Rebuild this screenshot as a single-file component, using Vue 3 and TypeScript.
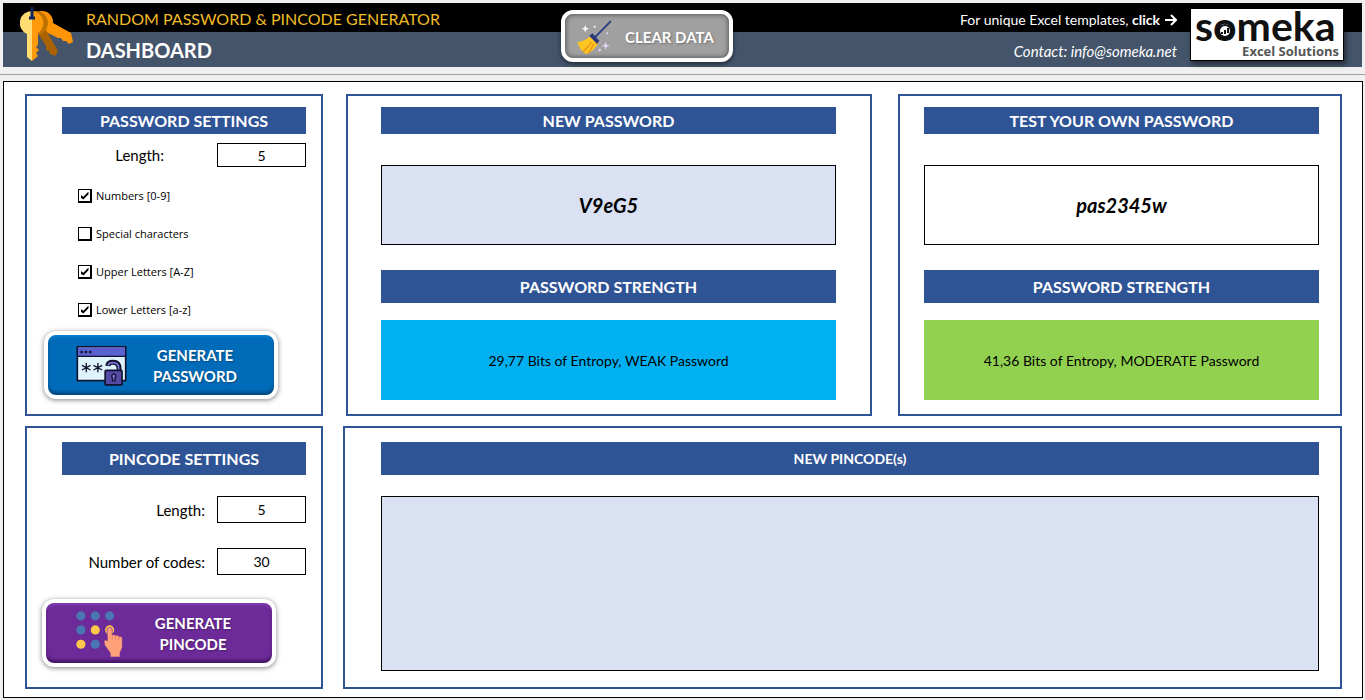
<script setup lang="ts">
import { computed, reactive, ref } from 'vue'

interface CharSet {
  id: string
  label: string
  chars: string
  on: boolean
}

interface Strength {
  text: string
  level: string
}

const DIGITS = '0123456789'
const LOWER = 'abcdefghijklmnopqrstuvwxyz'
const UPPER = LOWER.toUpperCase()
const SPECIAL = '!#$%&()*+-./:;<=>?@[]^_{|}~'

const sets = reactive<CharSet[]>([
  { id: 'numbers', label: 'Numbers [0-9]', chars: DIGITS, on: true },
  { id: 'special', label: 'Special characters', chars: SPECIAL, on: false },
  { id: 'upper', label: 'Upper Letters [A-Z]', chars: UPPER, on: true },
  { id: 'lower', label: 'Lower Letters [a-z]', chars: LOWER, on: true },
])

const passwordLength = ref('5')
const pinLength = ref('5')
const pinCount = ref('30')
const newPassword = ref('V9eG5')
const ownPassword = ref('pas2345w')
const pincodes = ref('')

function pick(pool: string, count: number): string {
  return Array.from({ length: count }, () => pool[Math.floor(Math.random() * pool.length)]).join('')
}

function rate(password: string): Strength {
  const pool = [DIGITS, LOWER, UPPER, SPECIAL]
    .filter((set) => [...password].some((c) => set.includes(c)))
    .reduce((sum, set) => sum + set.length, 0)
  if (!pool) return { text: '', level: 'none' }
  const bits = password.length * Math.log2(pool)
  const level = bits < 36 ? 'weak' : bits < 60 ? 'moderate' : 'strong'
  const shown = bits.toFixed(2).replace('.', ',')
  return { text: `${shown} Bits of Entropy, ${level.toUpperCase()} Password`, level }
}

const newStrength = computed(() => rate(newPassword.value))
const ownStrength = computed(() => rate(ownPassword.value))

function generatePassword() {
  const pool = sets.filter((s) => s.on).map((s) => s.chars).join('')
  newPassword.value = pool ? pick(pool, Number(passwordLength.value) || 0) : ''
}

function generatePincodes() {
  const count = Number(pinCount.value) || 0
  pincodes.value = Array.from({ length: count }, () => pick(DIGITS, Number(pinLength.value) || 0)).join('   ')
}

function clearData() {
  newPassword.value = ''
  ownPassword.value = ''
  pincodes.value = ''
}
</script>

<template>
  <div class="page">
    <header class="header">
      <div class="brand">
        <svg class="keys" viewBox="0 0 53 56" aria-hidden="true">
          <circle cx="22" cy="15" r="11" fill="#ff9505" />
          <path d="M24 24 L33 16 L51 26 L53 35 L49 37 L46 34 L43 34 L41 31 L38 31 L28 26 Z" fill="#ff9505" />
          <path d="M17 25 L26 23 L38 44 L35 49 L30 47 L29 44 L26 43 L26 39 Z" fill="#a86200" />
          <circle cx="16" cy="16" r="12" fill="#c07200" />
          <path d="M12 4 a12 12 0 0 1 6 22 V38 L16 40 L19 43 L16 46 L18 49 L12 54 Z" fill="#ff9a0a" />
          <path d="M12 4 A12 12 0 0 0 7 27 V50 L12 54 Z" fill="#ffdd73" />
          <path d="M12 0 V12 M9 11 H15" stroke="#10255c" stroke-width="3" />
        </svg>
        <div class="titles">
          <p class="product">RANDOM PASSWORD &amp; PINCODE GENERATOR</p>
          <h1>DASHBOARD</h1>
        </div>
      </div>

      <button class="push clear" type="button" @click="clearData">
        <svg class="broom" viewBox="78 56 105 105" aria-hidden="true">
          <path d="M178 61 L134 106" stroke="#2f3f86" stroke-width="6" stroke-linecap="round" />
          <path d="M116 106 Q101 119 80 122 Q84 145 105 158 Q127 151 141 127 Z" fill="#fcc521" />
          <path d="M122 123 L96 152 M129 127 L112 156" stroke="#e8951a" stroke-width="4" />
          <path d="M115 103 L124 96 L145 118 L138 128 Z" fill="#29397a" />
          <g fill="#fff">
            <path d="M103 71 l3 8 l8 3 l-8 3 l-3 9 l-3 -9 l-8 -3 l8 -3 Z" />
            <circle cx="131" cy="76" r="3" />
          </g>
          <g fill="#e3d4f5">
            <path d="M164 121 l3 9 l9 3 l-9 3 l-3 9 l-3 -9 l-9 -3 l9 -3 Z" />
            <circle cx="169" cy="96" r="3" />
            <circle cx="146" cy="146" r="4" />
          </g>
        </svg>
        <span>CLEAR DATA</span>
      </button>

      <div class="about">
        <div class="links">
          <a class="templates" href="#templates">
            <span>For unique Excel templates, <b>click</b></span>
            <svg class="arrow" viewBox="0 0 12 12" aria-hidden="true">
              <path d="M0 6 H11 M6 1 L11 6 L6 11" fill="none" stroke="#fff" stroke-width="2" />
            </svg>
          </a>
          <a class="contact" href="#contact">Contact: info@someka.net</a>
        </div>
        <a class="logo" href="#home">
          <span class="word">s<span class="ring">o<svg viewBox="0 0 12 12" aria-hidden="true">
            <circle cx="6" cy="6" r="7" fill="#111" />
            <circle cx="6" cy="6" r="5" fill="#fff" />
            <path d="M3 9 V7 M6 9 V5 M9 8 V3" stroke="#111" stroke-width="2" />
          </svg></span>meka</span>
          <span class="tag">Excel Solutions</span>
        </a>
      </div>
    </header>

    <main class="sheet">
      <div class="row">
        <section class="panel settings">
          <h2 class="bar slim">PASSWORD SETTINGS</h2>
          <div class="field near">
            <label for="password-length">Length:</label>
            <input id="password-length" v-model="passwordLength" type="text" inputmode="numeric">
          </div>
          <ul class="checks">
            <li v-for="set in sets" :key="set.id">
              <input :id="set.id" v-model="set.on" type="checkbox">
              <label :for="set.id">{{ set.label }}</label>
            </li>
          </ul>
          <button class="push wide blue" type="button" @click="generatePassword">
            <svg class="art" viewBox="136 76 154 124" aria-hidden="true">
              <rect x="140" y="80" width="146" height="102" fill="#dff3fd" stroke="#12122e" stroke-width="5" />
              <rect x="142" y="82" width="142" height="26" fill="#5a62cf" />
              <path d="M140 109 H286" stroke="#12122e" stroke-width="4" />
              <g fill="#12122e">
                <circle cx="153" cy="96" r="4" />
                <circle cx="166" cy="96" r="4" />
                <circle cx="179" cy="96" r="4" />
              </g>
              <path d="M167 129 V157 M154 136 L180 150 M180 136 L154 150 M202 129 V157 M189 136 L215 150 M215 136 L189 150" stroke="#12122e" stroke-width="4" />
              <path d="M232 138 Q233 127 248 127 Q266 127 266 146 V154" fill="none" stroke="#12122e" stroke-width="15" />
              <path d="M233 136 Q235 128 248 128 Q265 128 265 146 V154" fill="none" stroke="#7c74d8" stroke-width="5" />
              <rect x="224" y="151" width="51" height="44" rx="3" fill="#554aa5" stroke="#12122e" stroke-width="5" />
              <path d="M250 162 a7 7 0 0 1 4 12 V183 H246 V174 a7 7 0 0 1 4 -12 Z" fill="#7c74d8" stroke="#12122e" stroke-width="4" />
            </svg>
            <span>GENERATE<br>PASSWORD</span>
          </button>
        </section>

        <section class="panel fresh">
          <h2 class="bar slim">NEW PASSWORD</h2>
          <output class="value tinted">{{ newPassword }}</output>
          <h2 class="bar">PASSWORD STRENGTH</h2>
          <p class="result" :class="newStrength.level">{{ newStrength.text }}</p>
        </section>

        <section class="panel own">
          <h2 class="bar slim">TEST YOUR OWN PASSWORD</h2>
          <input v-model="ownPassword" class="value" type="text" aria-label="Test your own password">
          <h2 class="bar">PASSWORD STRENGTH</h2>
          <p class="result" :class="ownStrength.level">{{ ownStrength.text }}</p>
        </section>
      </div>

      <div class="row pins">
        <section class="panel settings pin-settings">
          <h2 class="bar">PINCODE SETTINGS</h2>
          <div class="field">
            <label for="pin-length">Length:</label>
            <input id="pin-length" v-model="pinLength" type="text" inputmode="numeric">
          </div>
          <div class="field">
            <label for="pin-count">Number of codes:</label>
            <input id="pin-count" v-model="pinCount" type="text" inputmode="numeric">
          </div>
          <button class="push wide purple" type="button" @click="generatePincodes">
            <svg class="art" viewBox="133 72 150 147" aria-hidden="true">
              <g fill="#4a76b4">
                <circle cx="151" cy="90" r="14" />
                <circle cx="195" cy="90" r="14" />
                <circle cx="239" cy="90" r="14" />
                <circle cx="151" cy="133" r="14" />
                <circle cx="195" cy="177" r="14" />
              </g>
              <g fill="#ffc84d">
                <circle cx="195" cy="133" r="14" />
                <circle cx="239" cy="133" r="14" />
                <circle cx="151" cy="177" r="14" />
              </g>
              <path d="M231 133 a8 8 0 0 1 16 0 V149 q6 -5 10 1 q7 -4 10 3 q9 -3 11 5 V184 Q277 194 271 201 V216 H241 V204 L224 180 Q220 167 224 163 L232 166 Z" fill="#ffa27c" stroke="#6b2a95" stroke-width="2" />
              <path d="M247 148 V162 M257 150 V164 M267 154 V166" stroke="#d9705c" stroke-width="2" />
            </svg>
            <span>GENERATE<br>PINCODE</span>
          </button>
        </section>

        <section class="panel codes">
          <h2 class="bar small">NEW PINCODE(s)</h2>
          <textarea v-model="pincodes" readonly aria-label="New pincodes"></textarea>
        </section>
      </div>
    </main>
  </div>
</template>

<style>
body {
  margin: 0;
  background: #f0f0f0;
}
</style>

<style scoped>
.page,
.page * {
  box-sizing: border-box;
}

.page {
  padding: 3px 2px 1px 3px;
  font-family: Lato, "Liberation Sans", sans-serif;
  font-size: 14px;
  color: #000;
}

h1,
h2,
p,
ul {
  margin: 0;
  padding: 0;
}

a {
  color: inherit;
  text-decoration: none;
}

button,
input,
textarea {
  margin: 0;
  font: inherit;
  color: inherit;
}

/* Header */
.header {
  display: grid;
  grid-template-columns: 558fr auto 629fr;
  height: 64px;
  margin-right: 1px;
  background: linear-gradient(#000 29px, #44546a 29px);
  color: #fff;
}

.brand {
  display: flex;
  gap: 13px;
  padding-left: 17px;
}

.keys {
  width: 53px;
  height: 56px;
  margin-top: 4px;
}

.product {
  font-size: 16px;
  line-height: 32px;
  color: #f2bc27;
  white-space: nowrap;
}

h1 {
  font-size: 20px;
  line-height: 30px;
}

.about {
  display: flex;
  justify-content: flex-end;
  gap: 13px;
  padding-right: 18px;
}

.links {
  display: flex;
  flex-direction: column;
  align-items: flex-end;
  white-space: nowrap;
}

.templates {
  display: flex;
  align-items: center;
  gap: 5px;
  line-height: 34px;
}

.contact {
  font-size: 15px;
  font-style: italic;
  line-height: 28px;
}

.arrow {
  width: 12px;
  height: 12px;
}

.logo {
  display: flex;
  flex-direction: column;
  justify-content: space-between;
  width: 154px;
  height: 53px;
  margin-top: 5px;
  padding: 0 4px 2px;
  border: 1px solid #000;
  background: #fff;
  box-shadow: 2px 3px 5px rgba(0, 0, 0, 0.5);
  color: #111;
}

.word {
  font-size: 41px;
  font-weight: 700;
  line-height: 33px;
}

.ring {
  position: relative;
}

.ring svg {
  position: absolute;
  left: 6px;
  bottom: 13px;
  width: 12px;
  height: 12px;
  overflow: visible;
}

.tag {
  align-self: flex-end;
  font-family: "Open Sans", sans-serif;
  font-size: 13px;
  font-weight: 700;
  line-height: 14px;
  color: #555;
}

/* Raised buttons */
.push {
  display: flex;
  align-items: center;
  border: 4px solid #fff;
  border-radius: 12px;
  color: #fff;
  font-size: 15px;
  font-weight: 700;
  line-height: 21px;
  text-align: center;
  cursor: pointer;
}

.push span {
  text-shadow: 1px 1px 2px rgba(0, 0, 0, 0.3);
}

.clear {
  gap: 13px;
  height: 52px;
  margin-top: 7px;
  padding: 2px 15px 0 12px;
  background: #a0a0a0;
  background-clip: padding-box;
  box-shadow: inset 0 0 4px 1px rgba(60, 60, 60, 0.7), 0 2px 4px rgba(0, 0, 0, 0.5);
}

.broom {
  width: 35px;
  height: 35px;
}

.wide {
  width: 234px;
  height: 68px;
  padding: 2px 11px 0 28px;
}

.wide span {
  flex: 1;
}

.blue {
  background: #006bb8;
  box-shadow: inset 0 -3px 3px #00477f, inset 0 2px 3px #0c80d4, 0 1px 5px rgba(0, 0, 0, 0.5);
}

.purple {
  background: #6c2b98;
  box-shadow: inset 0 -3px 3px #461566, inset 0 2px 3px #843bb4, 0 1px 5px rgba(0, 0, 0, 0.5);
}

.art {
  width: 51px;
  height: 48px;
}

/* Sheet and panels */
.sheet {
  display: flex;
  flex-direction: column;
  gap: 10px;
  margin-top: 14px;
  padding: 12px 20px 8px 21px;
  border: 1px solid #000;
  background: #fff;
  position: relative;
}

.sheet::before {
  content: "";
  position: absolute;
  top: -8px;
  left: -4px;
  right: -3px;
  height: 1px;
  background: #a0a0a0;
}

.row {
  display: grid;
  grid-template-columns: 298px 526fr 447fr;
  gap: 23px;
}

.pins {
  grid-template-columns: 298px 1fr;
  gap: 20px;
}

.panel {
  display: flex;
  flex-direction: column;
  min-width: 0;
  border: 2px solid #2f5496;
}

.settings {
  padding: 11px 15px 15px 35px;
}

.settings .push {
  margin-left: -18px;
}

.fresh {
  padding: 11px 34px 14px 33px;
}

.own {
  margin-left: 3px;
  padding: 11px 21px 14px 24px;
}

.pin-settings {
  padding: 14px 15px 20px 35px;
}

.pin-settings .push {
  margin-top: 24px;
  margin-left: -20px;
}

.codes {
  padding: 14px 21px 16px 36px;
}

.bar {
  height: 33px;
  background: #2f5496;
  color: #fff;
  font-size: 16px;
  font-weight: 700;
  line-height: 34px;
  text-align: center;
  white-space: nowrap;
}

.slim {
  height: 27px;
  line-height: 28px;
}

.small {
  font-size: 14px;
}

.field {
  display: flex;
  justify-content: flex-end;
  align-items: center;
  gap: 12px;
  margin-top: 21px;
  font-size: 15px;
}

.field + .field {
  margin-top: 25px;
}

.field input {
  width: 89px;
  height: 27px;
  padding: 0;
  border: 1px solid #000;
  background: #fff;
  font-size: 14px;
  text-align: center;
}

.field.near {
  gap: 53px;
  margin-top: 9px;
}

.near input {
  height: 24px;
}

.checks {
  display: flex;
  flex-direction: column;
  gap: 22px;
  margin: 21px 0 13px 16px;
  list-style: none;
  font-family: "Open Sans", "Noto Sans", sans-serif;
  font-size: 11px;
  line-height: 16px;
}

.checks li {
  display: flex;
  align-items: center;
  gap: 4px;
}

.checks input {
  display: grid;
  place-items: center;
  appearance: none;
  width: 14px;
  height: 14px;
  border: 1px solid #000;
  border-right-width: 2px;
  border-bottom-width: 2px;
  background: #fff;
}

.checks input:checked::before {
  content: "";
  width: 8px;
  height: 8px;
  background: #000;
  clip-path: polygon(0 40%, 36% 65%, 100% 0, 100% 34%, 36% 100%, 0 75%);
}

.value {
  display: flex;
  align-items: center;
  justify-content: center;
  width: 100%;
  height: 80px;
  margin: 31px 0 25px;
  padding: 0;
  border: 1px solid #000;
  border-radius: 0;
  background: #fff;
  font-size: 20px;
  font-style: italic;
  font-weight: 700;
  text-align: center;
}

.tinted {
  background: #d9e1f2;
}

.result {
  height: 80px;
  margin-top: 17px;
  line-height: 82px;
  text-align: center;
  white-space: nowrap;
  background: #d9e1f2;
}

.weak {
  background: #00b0f0;
}

.moderate {
  background: #92d050;
}

.strong {
  background: #00b050;
}

textarea {
  display: block;
  flex: 1;
  width: 100%;
  min-height: 175px;
  margin-top: 21px;
  padding: 8px;
  border: 1px solid #000;
  background: #d9e1f2;
  resize: none;
}
</style>
